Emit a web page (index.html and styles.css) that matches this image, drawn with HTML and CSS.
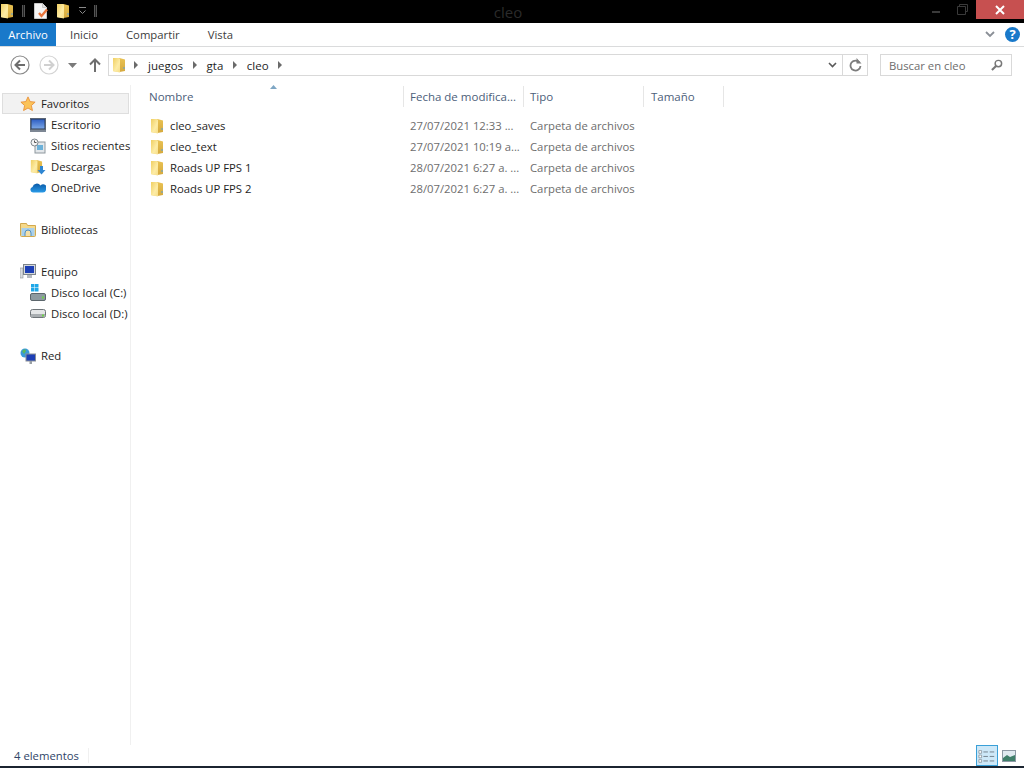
FILE: index.html
```html
<!DOCTYPE html>
<html lang="es">
<head>
  <meta charset="UTF-8" />
  <title>cleo</title>
  <link rel="stylesheet" href="styles.css">
</head>
<body>
  <svg class="defs" width="0" height="0">
    <defs>
      <linearGradient id="fold-left" x1="0" y1="0" x2="1" y2="1">
        <stop offset="0" stop-color="#f0cf62"/>
        <stop offset=".6" stop-color="#fdeca6"/>
        <stop offset="1" stop-color="#f6dd86"/>
      </linearGradient>
      <linearGradient id="fold-right" x1="0" y1="0" x2="0" y2="1">
        <stop offset="0" stop-color="#e9c253"/>
        <stop offset="1" stop-color="#d5a93e"/>
      </linearGradient>
      <linearGradient id="sky" x1="0" y1="0" x2="0" y2="1">
        <stop offset="0" stop-color="#2f5fc4"/>
        <stop offset="1" stop-color="#7ba7e6"/>
      </linearGradient>
      <linearGradient id="cloud" x1="0" y1="0" x2="0" y2="1">
        <stop offset="0" stop-color="#0a5aa8"/>
        <stop offset="1" stop-color="#2a9be8"/>
      </linearGradient>
    </defs>
    <symbol id="folder" viewBox="0 0 14 16">
      <path d="M1 1h6.500L13 2.500V14L7.500 15 1 14z" fill="url(#fold-right)"/>
      <path d="M1 1h5.500l1.500.8V15.500L1 14.300z" fill="url(#fold-left)"/>
      <path d="M11.500 10h1v2h-1z" fill="#5aa0d8"/>
    </symbol>
  </svg>

  <div class="titlebar">
    <div class="quick">
      <svg class="q1" width="14" height="16"><use href="#folder"/></svg>
      <span class="q-sep"></span>
      <svg class="q2" width="14" height="16" viewBox="0 0 14 16">
        <path d="M.5.500h8l4 4v11H.5z" fill="#f4f4f4" stroke="#c8c8c8"/>
        <path d="M8.500.500v4h4" fill="#ddd" stroke="#c8c8c8"/>
        <path d="M5 10l2.500 3L13 6.500" fill="none" stroke="#e8743b" stroke-width="2.400"/>
      </svg>
      <svg class="q3" width="14" height="16"><use href="#folder"/></svg>
      <svg class="q4" width="9" height="8" viewBox="0 0 9 8">
        <path d="M1 .5h7M1.500 3.500l3 3 3-3" fill="none" stroke="#8a8a8a"/>
      </svg>
      <span class="q-sep q-sep-last"></span>
    </div>
    <div class="title">cleo</div>
    <div class="winbtns">
      <span class="min"></span>
      <svg class="restore" width="11" height="11" viewBox="0 0 11 11">
        <path d="M2.500 2.500V.5h8v7h-2M.5 2.500h8v8h-8z" fill="none" stroke="#3a3a3a"/>
      </svg>
      <div class="close">
        <svg width="10" height="10" viewBox="0 0 10 10">
          <path d="M1 1l8 8M9 1l-8 8" stroke="#fff" stroke-width="2"/>
        </svg>
      </div>
    </div>
  </div>

  <div class="ribbon">
    <a class="tab tab-file">Archivo</a>
    <a class="tab">Inicio</a>
    <a class="tab">Compartir</a>
    <a class="tab">Vista</a>
    <div class="ribbon-right">
      <svg width="10" height="7" viewBox="0 0 10 7">
        <path d="M1 1l4 4 4-4" fill="none" stroke="#8a8f96" stroke-width="1.800"/>
      </svg>
      <div class="help">?</div>
    </div>
  </div>

  <div class="addressrow">
    <svg class="nav-btn" width="20" height="20" viewBox="0 0 20 20">
      <circle cx="10" cy="10" r="9" fill="#fff" stroke="#8a8a8a" stroke-width="1.200"/>
      <path d="M15 10H6M10 5.500L5.500 10l4.500 4.500" fill="none" stroke="#6d6d6d" stroke-width="2"/>
    </svg>
    <svg class="nav-btn next" width="20" height="20" viewBox="0 0 20 20">
      <circle cx="10" cy="10" r="9" fill="#fff" stroke="#d4d4d4" stroke-width="1.200"/>
      <path d="M5 10h9M10 5.500l4.500 4.500-4.500 4.500" fill="none" stroke="#d0d0d0" stroke-width="2"/>
    </svg>
    <svg class="recent" width="9" height="5" viewBox="0 0 9 5"><path d="M0 0h9L4.500 5z" fill="#7a7a7a"/></svg>
    <svg class="up" width="12" height="14" viewBox="0 0 12 14">
      <path d="M6 14V2M1 6.500L6 1.500l5 5" fill="none" stroke="#6f6f6f" stroke-width="2"/>
    </svg>
    <div class="addressbox">
      <svg class="addr-folder" width="14" height="16"><use href="#folder"/></svg>
      <span class="crumb-arrow"></span>
      <span class="crumb">juegos</span>
      <span class="crumb-arrow"></span>
      <span class="crumb">gta</span>
      <span class="crumb-arrow"></span>
      <span class="crumb">cleo</span>
      <span class="crumb-arrow"></span>
      <div class="addr-end">
        <svg width="9" height="6" viewBox="0 0 9 6"><path d="M1 1l3.500 3.500L8 1" fill="none" stroke="#5a5a5a" stroke-width="1.600"/></svg>
      </div>
      <div class="refresh">
        <svg width="13" height="14" viewBox="0 0 13 14">
          <path d="M10.500 4.500A5 5 0 1 0 11.500 8" fill="none" stroke="#7c7c7c" stroke-width="1.800"/>
          <path d="M7.500 0v5.500h5z" fill="#7c7c7c"/>
        </svg>
      </div>
    </div>
    <div class="searchbox">
      <span>Buscar en cleo</span>
      <svg width="12" height="12" viewBox="0 0 13 13">
        <circle cx="8" cy="5" r="3.500" fill="none" stroke="#777" stroke-width="1.600"/>
        <path d="M5.500 7.500L1 12" stroke="#777" stroke-width="2.200"/>
      </svg>
    </div>
  </div>

  <div class="main">
    <aside class="sidebar">
      <div class="nav-item head selected">
        <svg width="16" height="16" viewBox="0 0 18 18">
          <path d="M9 1l2.400 5.300 5.600.6-4.200 3.800 1.200 5.700L9 13.500l-5 2.900 1.200-5.700L1 6.900l5.600-.6z" fill="#fbc35a" stroke="#e8903a"/>
        </svg>
        <span>Favoritos</span>
      </div>
      <div class="nav-item">
        <svg width="16" height="14" viewBox="0 0 16 14">
          <rect x=".5" y=".5" width="15" height="11" fill="#2b3a55" stroke="#5b6675"/>
          <rect x="1.500" y="1.500" width="13" height="9" fill="url(#sky)"/>
          <rect x="0" y="12" width="16" height="2" fill="#7d8794"/>
        </svg>
        <span>Escritorio</span>
      </div>
      <div class="nav-item">
        <svg width="16" height="16" viewBox="0 0 16 16">
          <rect x="5" y="4" width="10" height="11" fill="#e3e7ea" stroke="#8e979e"/>
          <rect x="7" y="7" width="6" height="5" fill="#6bb0d8"/>
          <circle cx="4.500" cy="4.500" r="3.500" fill="#f5f5f5" stroke="#7e868c"/>
          <path d="M4.500 2.500v2h2" fill="none" stroke="#555"/>
        </svg>
        <span>Sitios recientes</span>
      </div>
      <div class="nav-item">
        <svg width="16" height="16" viewBox="0 0 16 16">
          <use href="#folder" width="13" height="15"/>
          <path d="M10 7h3v4h2.500l-4 4.500-4-4.500H10z" fill="#2f86d2"/>
        </svg>
        <span>Descargas</span>
      </div>
      <div class="nav-item">
        <svg width="16" height="11" viewBox="0 0 16 11">
          <path d="M3 10.500A2.800 2.800 0 0 1 2.500 5 4.500 4.500 0 0 1 10.500 3.500 3.500 3.500 0 0 1 15.800 8.500Q15.500 10.500 13 10.500z" fill="url(#cloud)"/>
        </svg>
        <span>OneDrive</span>
      </div>
      <div class="nav-gap"></div>
      <div class="nav-item head">
        <svg width="16" height="15" viewBox="0 0 16 15">
          <path d="M.5 1.500h6l1 2h8v10a1 1 0 0 1-1 1h-13a1 1 0 0 1-1-1z" fill="#f5d98b" stroke="#d2a94e"/>
          <path d="M1.500 6h13v8h-13z" fill="#a9d0ec"/>
          <path d="M5 14v-3a3 3 0 0 1 6 0v3" fill="#f3dfa8" stroke="#4e8fc5"/>
        </svg>
        <span>Bibliotecas</span>
      </div>
      <div class="nav-gap"></div>
      <div class="nav-item head">
        <svg width="16" height="15" viewBox="0 0 16 15">
          <rect x="0" y="4" width="3" height="10" fill="#d9dcdf" stroke="#8a9096" stroke-width=".6"/>
          <rect x="3.500" y="0.500" width="12" height="10" fill="#d5d9dd" stroke="#7d848a"/>
          <rect x="5" y="2" width="9" height="7" fill="#1d3fb5"/>
          <rect x="7" y="11" width="5" height="3" fill="#b6bbc0"/>
        </svg>
        <span>Equipo</span>
      </div>
      <div class="nav-item">
        <svg width="16" height="17" viewBox="0 0 16 17">
          <path d="M1 0h3.500v3.500H1zM5 0h3.500v3.500H5zM1 4h3.500v3.500H1zM5 4h3.500v3.500H5z" fill="#1ea7e8"/>
          <rect x=".5" y="9.500" width="15" height="7" rx="1.500" fill="#8d9aa0" stroke="#5c666c"/>
          <rect x="12" y="12.500" width="2" height="2" fill="#6fd04a"/>
        </svg>
        <span>Disco local (C:)</span>
      </div>
      <div class="nav-item">
        <svg width="16" height="9" viewBox="0 0 16 9">
          <rect x=".5" y=".5" width="15" height="8" rx="2" fill="#e4e6e7" stroke="#6e7478"/>
          <rect x="1" y="5" width="14" height="3" fill="#a9aeb1"/>
          <rect x="12" y="5.500" width="2" height="2" fill="#6fd04a"/>
        </svg>
        <span>Disco local (D:)</span>
      </div>
      <div class="nav-gap"></div>
      <div class="nav-item head">
        <svg width="16" height="16" viewBox="0 0 16 16">
          <circle cx="5" cy="5" r="4.500" fill="#3a9ad9"/>
          <path d="M2 3l3-2 1 2-2 3zM6 6l2 1-2 2z" fill="#5cb85c"/>
          <rect x="6" y="6" width="9.500" height="7" fill="#1d3fb5" stroke="#8a9096"/>
          <rect x="9.500" y="13" width="2.500" height="3" fill="#9aa0a5"/>
        </svg>
        <span>Red</span>
      </div>
    </aside>

    <section class="files">
      <svg class="sort" width="7" height="4" viewBox="0 0 7 4"><path d="M0 4l3.500-4L7 4z" fill="#7ea6c4"/></svg>
      <div class="columns">
        <div class="col col-name">Nombre</div>
        <div class="col col-date">Fecha de modifica...</div>
        <div class="col col-type">Tipo</div>
        <div class="col col-size">Tamaño</div>
      </div>
      <div class="rows">
        <div class="row">
          <div class="col-name name"><svg width="14" height="16"><use href="#folder"/></svg>cleo_saves</div>
          <div class="col-date">27/07/2021 12:33 ...</div>
          <div class="col-type">Carpeta de archivos</div>
        </div>
        <div class="row">
          <div class="col-name name"><svg width="14" height="16"><use href="#folder"/></svg>cleo_text</div>
          <div class="col-date">27/07/2021 10:19 a...</div>
          <div class="col-type">Carpeta de archivos</div>
        </div>
        <div class="row">
          <div class="col-name name"><svg width="14" height="16"><use href="#folder"/></svg>Roads UP FPS 1</div>
          <div class="col-date">28/07/2021 6:27 a. ...</div>
          <div class="col-type">Carpeta de archivos</div>
        </div>
        <div class="row">
          <div class="col-name name"><svg width="14" height="16"><use href="#folder"/></svg>Roads UP FPS 2</div>
          <div class="col-date">28/07/2021 6:27 a. ...</div>
          <div class="col-type">Carpeta de archivos</div>
        </div>
      </div>
    </section>
  </div>

  <footer class="statusbar">
    <span class="count">4 elementos</span>
    <div class="views">
      <div class="view view-active">
        <svg width="18" height="14" viewBox="0 0 20 14">
          <path d="M1 1h3v3H1zM1 6h3v3H1zM1 11h3v3H1z" fill="#fff" stroke="#7f8a93" stroke-width=".8"/>
          <path d="M6 2.500h5M13 2.500h5M6 7.500h5M13 7.500h5M6 12.500h5M13 12.500h5" stroke="#6d7a86"/>
        </svg>
      </div>
      <div class="view">
        <svg width="14" height="12" viewBox="0 0 14 12">
          <rect x=".5" y=".5" width="13" height="11" fill="#dfeaf0" stroke="#8d9aa5"/>
          <path d="M1 8l4-3 3 2 5-2v6H1z" fill="#3f7f6a"/>
        </svg>
      </div>
    </div>
  </footer>
</body>
</html>
```

FILE: styles.css
```css
* {
  margin: 0;
  padding: 0;
  box-sizing: border-box;
}
html, body {
  height: 100%;
}
body {
  display: flex;
  flex-direction: column;
  height: 768px;
  overflow: hidden;
  background: #fff;
  color: #1e1e1e;
  font-family: "Open Sans", "Noto Sans", sans-serif;
  font-size: 11.3px;
}
svg {
  display: block;
  flex: none;
}
.defs {
  position: absolute;
}

/* title bar */
.titlebar {
  height: 23px;
  background: #000;
  display: flex;
  align-items: flex-start;
  position: relative;
}
.quick {
  display: flex;
  align-items: center;
  height: 22px;
}
.q1 { margin-left: 0; }
.q-sep {
  width: 3px;
  height: 12px;
  margin-left: 8px;
  border: 1px solid #555;
  border-width: 0 1px;
  background: #222;
}
.q2 { margin-left: 9px; }
.q3 { margin-left: 8px; }
.q4 { margin-left: 8px; }
.q-sep-last { margin-left: 7px; }
.title {
  position: absolute;
  left: 0;
  right: 0;
  top: 2px;
  padding-right: 8px;
  text-align: center;
  font-size: 15px;
  color: #2b2b2b;
}
.winbtns {
  margin-left: auto;
  display: flex;
  align-items: center;
  height: 19px;
}
.min {
  width: 8px;
  height: 2px;
  background: #3a3a3a;
  margin-top: 5px;
}
.restore { margin-left: 17px; margin-top: -1px; }
.close {
  width: 48px;
  height: 19px;
  margin-left: 8px;
  background: #c75050;
  display: flex;
  align-items: center;
  justify-content: center;
}

/* ribbon */
.ribbon {
  height: 24px;
  display: flex;
  border-bottom: 1px solid #dadbdc;
}
.tab {
  height: 23px;
  line-height: 23px;
  padding: 0 14px;
  color: #3c3c3c;
}
.tab-file {
  width: 56px;
  padding: 0;
  text-align: center;
  background: #1979ca;
  color: #fff;
}
.ribbon-right {
  margin-left: auto;
  display: flex;
  align-items: center;
  gap: 10px;
  padding-right: 4px;
  height: 23px;
}
.help {
  width: 15px;
  height: 15px;
  border-radius: 50%;
  background: #1979ca;
  color: #fff;
  font-size: 13px;
  font-weight: 700;
  line-height: 15px;
  text-align: center;
}

/* address row */
.addressrow {
  height: 38px;
  display: flex;
  align-items: center;
  padding: 0 0 2px 10px;
}
.nav-btn.next { margin-left: 9px; }
.recent { margin-left: 9px; }
.up { margin-left: 12px; }
.addressbox {
  width: 760px;
  height: 22px;
  margin-left: 7px;
  border: 1px solid #d9d9d9;
  display: flex;
  align-items: center;
  font-size: 11.5px;
}
.addr-folder { margin-left: 3px; margin-right: 8px; }
.crumb { margin: 0 9.5px 0 10px; color: #1e1e1e; }
.crumb-arrow {
  width: 0;
  height: 0;
  border-left: 4px solid #6a6a6a;
  border-top: 4px solid transparent;
  border-bottom: 4px solid transparent;
}
.addr-end {
  margin-left: auto;
  width: 20px;
  display: flex;
  justify-content: center;
}
.refresh {
  width: 25px;
  height: 20px;
  border-left: 1px solid #d9d9d9;
  display: flex;
  align-items: center;
  justify-content: center;
}
.searchbox {
  width: 132px;
  height: 22px;
  margin-left: 12px;
  border: 1px solid #d9d9d9;
  display: flex;
  align-items: center;
  justify-content: space-between;
  padding: 0 8px 0 8px;
  color: #6d6d6d;
}

/* main area */
.main {
  flex: 1;
  display: flex;
  min-height: 0;
}
.sidebar {
  width: 131px;
  border-right: 1px solid #f0f0f0;
  padding-top: 8px;
  overflow: hidden;
}
.nav-item {
  height: 21px;
  display: flex;
  align-items: center;
  white-space: nowrap;
  padding-left: 30px;
}
.nav-item svg {
  margin-right: 5px;
  margin-left: 0;
}
.nav-item span { margin-left: auto; width: 80px; flex: none; }
.nav-item.head { padding-left: 20px; }
.nav-item.head span { margin-left: 0; }
.nav-gap { height: 21px; }
.selected {
  margin: 0 1px 0 2px;
  padding-left: 17px !important;
  background: #f2f2f2;
  border: 1px solid #dedede;
}

.files {
  flex: 1;
  position: relative;
}
.sort {
  position: absolute;
  left: 139px;
  top: 0;
}
.columns {
  display: flex;
  height: 21px;
  margin-top: 1px;
  line-height: 21px;
  font-size: 11.5px;
  color: #4c607a;
}
.col {
  border-right: 1px solid #e6e6e6;
  white-space: nowrap;
}
.col-name { width: 273px; padding-left: 18px; flex: none; }
.col-date { width: 120px; padding-left: 6px; flex: none; }
.col-type { width: 120px; padding-left: 6px; flex: none; }
.col-size { width: 80px; padding-left: 7px; flex: none; }
.rows { padding-top: 8px; }
.row {
  display: flex;
  height: 21px;
  align-items: center;
  color: #6d6d6d;
  white-space: nowrap;
}
.name {
  display: flex;
  align-items: center;
  gap: 6px;
  padding-left: 19px;
  color: #1e1e1e;
}

/* status bar */
.statusbar {
  height: 23px;
  display: flex;
  align-items: center;
  justify-content: space-between;
  border-bottom: 2px solid #1b2430;
  padding-left: 14px;
  color: #2f4468;
  flex: none;
}
.count {
  width: 75px;
  border-right: 1px solid #f0f0f0;
}
.views {
  display: flex;
  align-items: center;
  padding-right: 4px;
}
.view {
  width: 22px;
  height: 21px;
  display: flex;
  align-items: center;
  justify-content: center;
}
.view-active {
  background: #cde8f8;
  border: 1px solid #3aa0d8;
}
```
